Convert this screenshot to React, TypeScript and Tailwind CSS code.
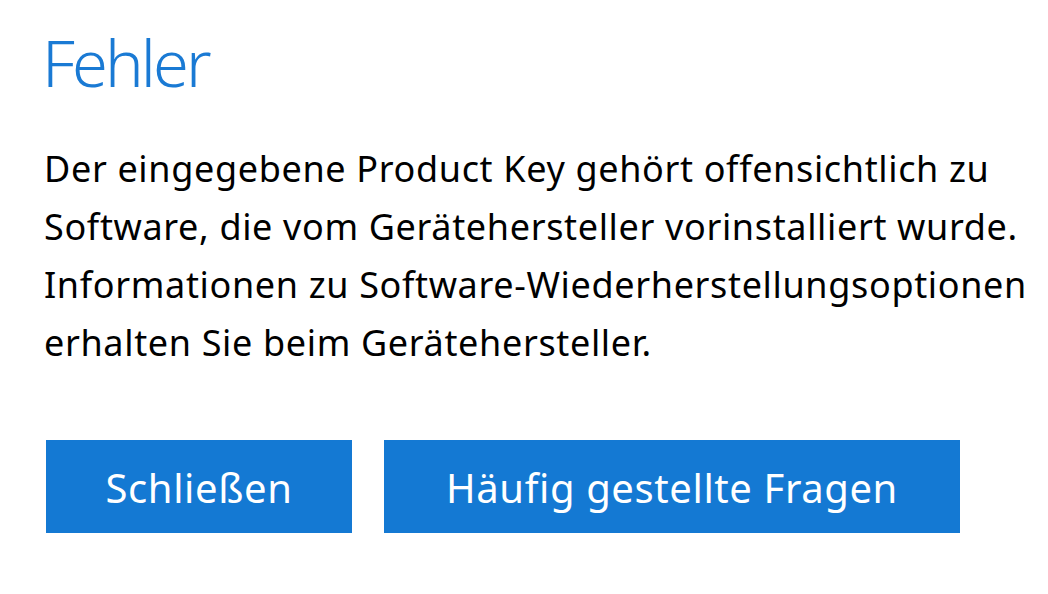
import React from 'react'

const font = { fontFamily: '"Noto Sans", "Open Sans", sans-serif' }

export default function App() {
    return (
        <div className="w-[1048px] h-[594px] bg-white overflow-hidden" style={font}>
            <div className="pl-[44px] pt-[20px]">
                <h1 className="-ml-[2px] text-[65px] leading-[84px] font-light tracking-[-2.9px] text-[#1a7ad4]">Fehler</h1>
                <p className="mt-[36px] text-[36px] leading-[58px] text-black tracking-[0.65px]">
                    Der eingegebene Product Key gehört offensichtlich zu<br />
                    Software, die vom Gerätehersteller vorinstalliert wurde.<br />
                    Informationen zu Software-Wiederherstellungsoptionen<br />
                    erhalten Sie beim Gerätehersteller.
                </p>
                <div className="mt-[68px] flex gap-[32px] pl-[2px]">
                    <button className="w-[306px] h-[93px] pt-[3px] bg-[#1479d3] text-white text-[40px] tracking-[0.6px]">Schließen</button>
                    <button className="w-[576px] h-[93px] pt-[3px] bg-[#1479d3] text-white text-[40px] tracking-[0.6px]">Häufig gestellte Fragen</button>
                </div>
            </div>
        </div>
    )
}
